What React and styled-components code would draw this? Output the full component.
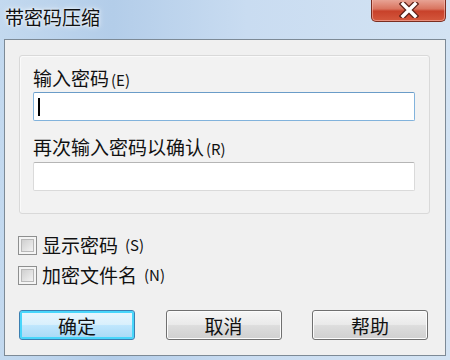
import React from 'react';
import styled, { createGlobalStyle } from 'styled-components';

const GlobalStyle = createGlobalStyle`
  html, body {
    margin: 0;
    padding: 0;
    width: 450px;
    height: 360px;
    overflow: hidden;
  }
  body {
    font-family: "Noto Sans CJK SC", "Noto Sans", sans-serif;
  }
`;

const Window = styled.div`
  width: 450px;
  height: 360px;
  display: flex;
  flex-direction: column;
  box-sizing: border-box;
  background: linear-gradient(90deg, #c3d9ef 0%, #b3cde9 25%, #c9dcf1 55%, #d3e3f3 100%);
`;

const TitleBar = styled.div`
  height: 39px;
  display: flex;
  align-items: flex-start;
  justify-content: space-between;
  flex-shrink: 0;
`;

const Title = styled.div`
  margin: 5px 0 0 5px;
  font-size: 19px;
  line-height: 24px;
  color: #111;
  text-shadow: 0 0 6px rgba(255, 255, 255, 0.9), 0 0 3px rgba(255, 255, 255, 0.9);
`;

const CloseButton = styled.div`
  width: 75px;
  height: 23px;
  margin-right: 4px;
  margin-top: -1px;
  box-sizing: border-box;
  border: 1px solid #7a2d20;
  border-top: none;
  border-radius: 0 0 5px 5px;
  background: linear-gradient(180deg, #e9a89a 0%, #d9745f 45%, #c8412a 55%, #d4583d 100%);
  box-shadow: inset 0 0 0 1px rgba(255, 200, 190, 0.5);
  display: flex;
  align-items: center;
  justify-content: center;
`;

const Client = styled.div`
  flex: 1;
  margin: 0 4px 4px 4px;
  box-sizing: border-box;
  border: 1px solid #7d8a96;
  background: #f0f0f0;
  padding: 15px 15px 0 14px;
  display: flex;
  flex-direction: column;
`;

const Group = styled.div`
  box-sizing: border-box;
  height: 159px;
  border: 1px solid #d9d9d9;
  border-radius: 3px;
  box-shadow: inset 1px 1px 0 #fafafa;
  background: #f2f2f2;
  padding: 10px 14px 0 13px;
  display: flex;
  flex-direction: column;
`;

const Label = styled.div`
  font-size: 19px;
  line-height: 22px;
  color: #111;
  height: 22px;
  margin-top: ${(p) => p.$top}px;
`;

const Mnemonic = styled.span`
  font-size: 15px;
  margin-left: 2px;
`;

const Field = styled.div`
  height: 29px;
  margin-top: ${(p) => p.$top}px;
  box-sizing: border-box;
  background: #fff;
  border: 1px solid ${(p) => (p.$focused ? '#82b3dc' : '#dadada')};
  border-top-color: ${(p) => (p.$focused ? '#6a9cc8' : '#b5b5b5')};
  border-radius: 2px;
  display: flex;
  align-items: center;
  padding-left: 4px;
`;

const Caret = styled.span`
  width: 2px;
  height: 18px;
  background: #000;
`;

const Checks = styled.div`
  display: flex;
  flex-direction: column;
  gap: 10px;
  margin-top: 21px;
`;

const CheckRow = styled.label`
  display: flex;
  align-items: center;
  gap: 5px;
  font-size: 19px;
  line-height: 20px;
  color: #111;
  margin-left: -1px;
`;

const Box = styled.span`
  width: 19px;
  height: 19px;
  box-sizing: border-box;
  border: 1px solid #8e8f8f;
  background: #f4f4f4;
  display: flex;
  align-items: center;
  justify-content: center;
  &::after {
    content: '';
    width: 11px;
    height: 11px;
    border: 1px solid #b8b8b8;
    background: linear-gradient(135deg, #cfcfcf, #f2f2f2);
  }
`;

const Buttons = styled.div`
  display: flex;
  justify-content: space-between;
  margin-top: 25px;
  padding-right: 2px;
`;

const Button = styled.div`
  width: 116px;
  height: 30px;
  box-sizing: border-box;
  border-radius: 3px;
  border: 1px solid ${(p) => (p.$default ? '#3c7fb1' : '#707070')};
  background: ${(p) =>
    p.$default
      ? 'linear-gradient(180deg, #eaf6fd 0%, #d9f0fc 48%, #bee6fd 52%, #a7d9f5 100%)'
      : 'linear-gradient(180deg, #f6f6f6 0%, #eaeaea 48%, #dddddd 52%, #d0d0d0 100%)'};
  box-shadow: ${(p) =>
    p.$default ? 'inset 0 0 0 2px #48d6fb' : 'inset 0 0 0 1px #fcfcfc'};
  display: flex;
  align-items: center;
  justify-content: center;
  font-size: 19px;
  color: #111;
`;

export default function App() {
  return (
    <>
      <GlobalStyle />
      <Window>
        <TitleBar>
          <Title>带密码压缩</Title>
          <CloseButton>
            <svg width="20" height="16" viewBox="0 0 20 16">
              <path
                d="M4 2 L16 14 M16 2 L4 14"
                stroke="#5a1f16"
                strokeWidth="6"
                strokeLinecap="square"
              />
              <path
                d="M4 2 L16 14 M16 2 L4 14"
                stroke="#ffffff"
                strokeWidth="3.5"
                strokeLinecap="square"
              />
            </svg>
          </CloseButton>
        </TitleBar>
        <Client>
          <Group>
            <Label $top={1}>
              输入密码<Mnemonic>(E)</Mnemonic>
            </Label>
            <Field $top={3} $focused>
              <Caret />
            </Field>
            <Label $top={15}>
              再次输入密码以确认<Mnemonic>(R)</Mnemonic>
            </Label>
            <Field $top={4} />
          </Group>
          <Checks>
            <CheckRow>
              <Box />
              显示密码<Mnemonic>(S)</Mnemonic>
            </CheckRow>
            <CheckRow>
              <Box />
              加密文件名<Mnemonic>(N)</Mnemonic>
            </CheckRow>
          </Checks>
          <Buttons>
            <Button $default>确定</Button>
            <Button>取消</Button>
            <Button>帮助</Button>
          </Buttons>
        </Client>
      </Window>
    </>
  );
}
